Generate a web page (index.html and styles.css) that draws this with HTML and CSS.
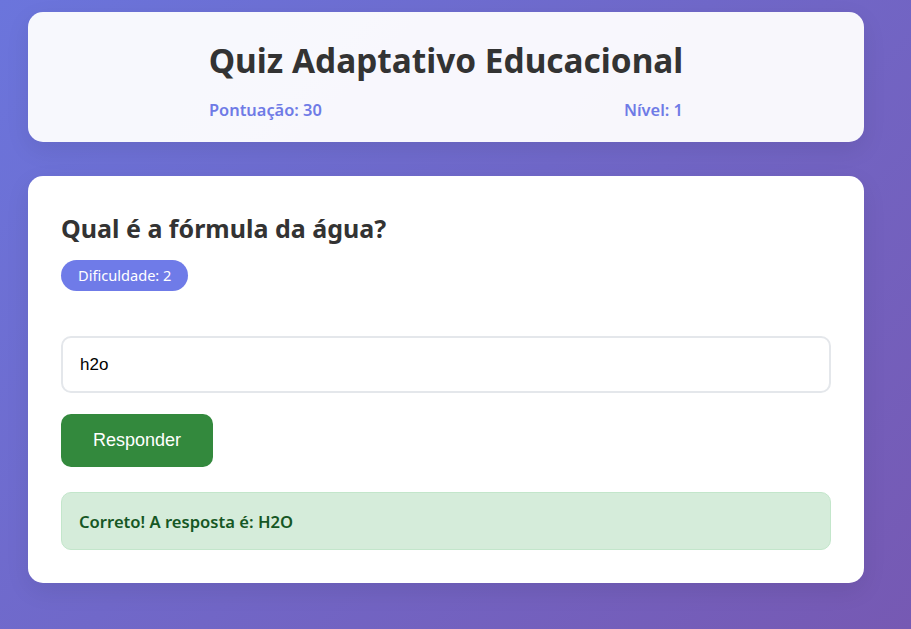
FILE: index.html
```html
<!DOCTYPE html>
<html lang="pt">
<head>
<meta charset="utf-8">
<title>Quiz Adaptativo Educacional</title>
<link rel="stylesheet" href="styles.css">
</head>
<body>
<div class="container">
  <header class="header">
    <h1 class="title">Quiz Adaptativo Educacional</h1>
    <div class="stats">
      <span class="stat">Pontuação: 30</span>
      <span class="stat">Nível: 1</span>
    </div>
  </header>
  <main class="card">
    <h2 class="question">Qual é a fórmula da água?</h2>
    <span class="badge">Dificuldade: 2</span>
    <input class="answer" type="text" value="h2o">
    <button class="btn">Responder</button>
    <div class="feedback">Correto! A resposta é: H2O</div>
  </main>
</div>
</body>
</html>
```
FILE: styles.css
```css
html, body {
  margin: 0;
  height: 100%;
}
body {
  background: linear-gradient(135deg, #6b75dc 0%, #7659b3 100%);
  font-family: "Noto Sans", sans-serif;
  color: #333;
}
.container {
  width: 836px;
  padding: 12px 0 0 28px;
  display: flex;
  flex-direction: column;
  gap: 34px;
}
.header {
  background: rgba(255, 255, 255, 0.95);
  border-radius: 15px;
  padding: 26px 30px 21px;
  box-shadow: 0 8px 24px rgba(0, 0, 0, 0.08);
}
.title {
  margin: 0 0 17px;
  text-align: center;
  font-size: 33.4px;
  font-weight: 700;
  line-height: 44px;
  color: #333;
}
.stats {
  display: flex;
  justify-content: space-around;
  font-size: 16.4px;
  font-weight: 600;
  color: #6f7be6;
  line-height: 22px;
}
.card {
  background: #fff;
  border-radius: 15px;
  padding: 33px 33px 33px;
  display: flex;
  flex-direction: column;
  align-items: flex-start;
  box-shadow: 0 8px 24px rgba(0, 0, 0, 0.08);
}
.question {
  margin: 3px 0 16px;
  font-size: 25px;
  font-weight: 700;
  line-height: 32px;
  color: #333;
}
.badge {
  background: #6f7be8;
  color: #fff;
  font-size: 14.6px;
  line-height: 31px;
  height: 31px;
  padding: 0 17px;
  border-radius: 16px;
}
.answer {
  box-sizing: border-box;
  margin-top: 45px;
  width: 100%;
  height: 57px;
  border: 2px solid #e4e7eb;
  border-radius: 10px;
  padding: 0 17px;
  font-family: "Liberation Sans", Arial, sans-serif;
  font-size: 17px;
  color: #000;
  outline: none;
}
.btn {
  margin-top: 21px;
  width: 152px;
  height: 53px;
  border: none;
  border-radius: 10px;
  background: #33893d;
  color: #fff;
  font-family: "Liberation Sans", Arial, sans-serif;
  font-size: 18px;
}
.feedback {
  box-sizing: border-box;
  margin-top: 25px;
  width: 100%;
  height: 58px;
  display: flex;
  align-items: center;
  padding: 0 17px;
  background: #d5ecda;
  border: 1px solid #c3e6cb;
  border-radius: 10px;
  color: #155724;
  font-size: 16.6px;
  font-weight: 600;
}
```
